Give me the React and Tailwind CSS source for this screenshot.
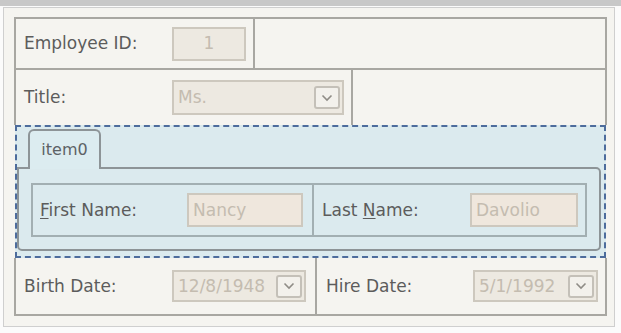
import React from 'react';

const font = { fontFamily: '"DejaVu Sans", Verdana, sans-serif' };

const Chevron = () => (
    <svg width="12" height="8" viewBox="0 0 12 8" fill="none">
        <path d="M1.5 1.5 L6 6 L10.5 1.5" stroke="#8f8c86" strokeWidth="1.6" />
    </svg>
);

const TextBox = ({ value, w, h = 'h-[34px]', center, tint }) => (
    <div
        className={`${w} ${h} border-2 border-[#cdc8be] ${tint ? 'bg-[#efe7dd]' : 'bg-[#ede9e1]'} flex items-center ${center ? 'justify-center' : 'pl-[4px]'} text-[#c4bcb0]`}
    >
        {value}
    </div>
);

const Combo = ({ value, w, h }) => (
    <div className={`${w} ${h} border-2 border-[#cdc8be] bg-[#ede9e1] flex items-center justify-between pl-[4px] pr-[2px] text-[#c4bcb0]`}>
        <span>{value}</span>
        <div className="w-[26px] h-[23px] border-2 border-[#c4c0b8] rounded-[3px] bg-[#f3f1ec] flex items-center justify-center">
            <Chevron />
        </div>
    </div>
);

const Label = ({ children, w = 'w-[148px]' }) => (
    <div className={`${w} shrink-0 text-[#5c5c5c]`}>{children}</div>
);

export default function App() {
    return (
        <div className="w-[621px] h-[333px] bg-[#fbfbfb] overflow-hidden text-[17px] leading-none" style={font}>
            <div className="h-[6px] bg-[#c8c8c8]" />
            <div className="ml-[3px] mt-[1px] w-[612px] h-[320px] border border-[#cfcfcf] bg-[#f5f4f0] pl-[10px] pt-[9px]">
                <div className="w-[593px]">
                    {/* row 1 */}
                    <div className="flex h-[53px] border-2 border-[#a8a7a2]">
                        <div className="w-[239px] border-r-2 border-[#a8a7a2] flex items-center pl-[8px]">
                            <Label>Employee ID:</Label>
                            <TextBox value="1" w="w-[74px]" center />
                        </div>
                        <div className="flex-1" />
                    </div>
                    {/* row 2 */}
                    <div className="flex h-[55px] border-x-2 border-[#a8a7a2]">
                        <div className="w-[337px] border-r-2 border-[#a8a7a2] flex items-center pl-[8px]">
                            <Label>Title:</Label>
                            <Combo value="Ms." w="w-[172px]" h="h-[35px]" />
                        </div>
                        <div className="flex-1" />
                    </div>
                    {/* group */}
                    <div className="ml-[1px] w-[591px] h-[133px] border-2 border-dashed border-[#4d6c9c] bg-[#dbeaee] flex flex-col">
                        <div className="h-[40px] flex items-end">
                            <div className="relative z-10 ml-[11px] -mb-[2px] w-[73px] h-[40px] border-2 border-b-0 border-[#8d9497] rounded-t-[6px] bg-[#dcecf0] flex items-center justify-center text-[16px] text-[#5c6266]">
                                item0
                            </div>
                        </div>
                        <div className="mr-[3px] h-[84px] border-2 border-[#8d9497] rounded-b-[5px] rounded-tr-[5px] pt-[14px] pl-[12px] pr-[12px]">
                            <div className="flex h-[54px] border-2 border-[#a2afb2]">
                                <div className="w-[281px] border-r-2 border-[#a2afb2] flex items-center pl-[7px]">
                                    <Label w="w-[147px]">
                                        <span className="underline underline-offset-2">F</span>irst Name:
                                    </Label>
                                    <TextBox value="Nancy" w="w-[116px]" tint />
                                </div>
                                <div className="flex-1 flex items-center pl-[8px]">
                                    <Label>
                                        Last <span className="underline underline-offset-2">N</span>ame:
                                    </Label>
                                    <TextBox value="Davolio" w="w-[108px]" tint />
                                </div>
                            </div>
                        </div>
                    </div>
                    {/* row 3 */}
                    <div className="flex h-[58px] border-x-2 border-b-2 border-[#a8a7a2]">
                        <div className="w-[301px] border-r-2 border-[#a8a7a2] flex items-center pl-[8px]">
                            <Label>Birth Date:</Label>
                            <Combo value="12/8/1948" w="w-[134px]" h="h-[32px]" />
                        </div>
                        <div className="flex-1 flex items-center pl-[9px]">
                            <Label w="w-[147px]">Hire Date:</Label>
                            <Combo value="5/1/1992" w="w-[125px]" h="h-[32px]" />
                        </div>
                    </div>
                </div>
            </div>
        </div>
    );
}
